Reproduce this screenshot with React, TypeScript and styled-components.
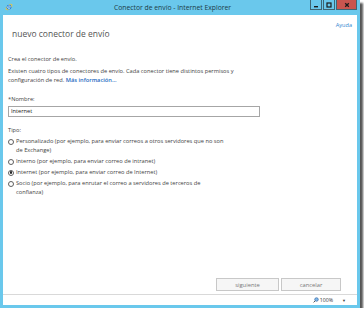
import React from 'react';
import styled, { createGlobalStyle } from 'styled-components';

const GlobalStyle = createGlobalStyle`
  html, body {
    margin: 0;
    padding: 0;
    background: #ffffff;
  }
  body {
    font-family: "Open Sans", "Noto Sans", sans-serif;
  }
`;

const Window = styled.div`
  width: 360px;
  height: 308px;
  box-sizing: border-box;
  padding: 0 3px 3px 3px;
  background: #6ac8ec;
  display: flex;
  flex-direction: column;
  box-shadow: 3px 3px 2px rgba(55, 55, 55, 0.85);
`;

const TitleBar = styled.div`
  height: 15px;
  flex: none;
  display: flex;
  align-items: flex-start;
`;

const AppIcon = styled.svg`
  width: 8px;
  height: 8px;
  margin: 3px 0 0 2px;
`;

const Title = styled.div`
  flex: 1;
  text-align: center;
  font-size: 6.8px;
  line-height: 15px;
  color: #1d3b47;
  padding-left: 22px;
`;

const Controls = styled.div`
  display: flex;
  gap: 1px;
`;

const ControlButton = styled.div<{ $close?: boolean }>`
  width: ${(p) => (p.$close ? '21px' : '12px')};
  height: 10px;
  box-sizing: border-box;
  border: 1px solid #3f6674;
  border-top: none;
  background: ${(p) => (p.$close ? '#c9554f' : '#6ac8ec')};
  display: flex;
  align-items: center;
  justify-content: center;
`;

const Content = styled.div`
  flex: 1;
  background: #ffffff;
  display: flex;
  flex-direction: column;
  color: #444444;
`;

const Header = styled.div`
  display: flex;
  justify-content: space-between;
  align-items: flex-start;
  padding: 0 5px 0 9px;
`;

const Heading = styled.h1`
  margin: 13px 0 0 0;
  font-size: 8.5px;
  line-height: 12px;
  font-weight: 400;
  color: #555555;
`;

const HelpLink = styled.a`
  margin-top: 6px;
  font-size: 5.6px;
  line-height: 8px;
  color: #2f86cf;
  text-decoration: none;
`;

const Body = styled.div`
  padding: 0 5px;
  font-size: 5.7px;
  line-height: 9px;
`;

const Paragraph = styled.p<{ $top?: number }>`
  margin: ${(p) => p.$top ?? 0}px 0 0 0;
`;

const MoreLink = styled.a`
  color: #1f6cbf;
  text-decoration: none;
  font-weight: 600;
`;

const FieldLabel = styled.label`
  display: block;
  margin-top: 10px;
`;

const TextInput = styled.input`
  display: block;
  box-sizing: border-box;
  margin-top: 1.5px;
  width: 252px;
  height: 11px;
  padding: 0 2px;
  border: 1px solid #a6a6a6;
  font-family: "Open Sans", "Noto Sans", sans-serif;
  font-size: 5.7px;
  color: #222222;
  outline: none;
`;

const GroupLabel = styled.div`
  margin-top: 9.5px;
`;

const RadioList = styled.div`
  display: flex;
  flex-direction: column;
  gap: 2px;
  margin-top: 2px;
`;

const RadioRow = styled.label`
  display: flex;
  align-items: flex-start;
  gap: 2px;
  width: 219px;
`;

const RadioDot = styled.input.attrs({ type: 'radio' })`
  appearance: none;
  flex: none;
  width: 6px;
  height: 6px;
  margin: 1.5px 0 0 0;
  box-sizing: border-box;
  border: 1px solid #5e5e5e;
  border-radius: 50%;
  background: #ffffff;
  display: grid;
  place-items: center;

  &:checked::after {
    content: '';
    width: 2.5px;
    height: 2.5px;
    border-radius: 50%;
    background: #222222;
  }
`;

const Spacer = styled.div`
  flex: 1;
`;

const Footer = styled.div`
  display: flex;
  justify-content: flex-end;
  gap: 2px;
  padding: 0 16px 3px 0;
`;

const Button = styled.button<{ $width: number }>`
  width: ${(p) => p.$width}px;
  height: 13px;
  box-sizing: border-box;
  border: 1px solid #c8c8c8;
  background: #f6f6f6;
  color: #777777;
  font-family: "Open Sans", "Noto Sans", sans-serif;
  font-size: 5.8px;
  padding: 0;
`;

const StatusBar = styled.div`
  height: 11px;
  flex: none;
  box-sizing: border-box;
  border-top: 1px solid #d9d9d9;
  background: #ffffff;
  display: flex;
  align-items: center;
  justify-content: flex-end;
  padding-right: 11px;
  font-size: 5.2px;
  color: #333333;
`;

const Zoom = styled.span`
  display: flex;
  align-items: center;
  gap: 1px;
`;

const Caret = styled.span`
  margin-left: 9px;
  font-size: 4px;
  color: #444444;
`;

const options = [
  {
    id: 'custom',
    text: 'Personalizado (por ejemplo, para enviar correos a otros servidores que no son de Exchange)',
  },
  { id: 'internal', text: 'Interno (por ejemplo, para enviar correo de intranet)' },
  { id: 'internet', text: 'Internet (por ejemplo, para enviar correo de Internet)' },
  {
    id: 'partner',
    text: 'Socio (por ejemplo, para enrutar el correo a servidores de terceros de confianza)',
  },
];

const App: React.FC = () => {
  return (
    <>
      <GlobalStyle />
      <Window>
        <TitleBar>
          <AppIcon viewBox="0 0 16 16">
            <ellipse cx="8" cy="8" rx="7.5" ry="3.2" transform="rotate(-40 8 8)" fill="none" stroke="#f2c230" strokeWidth="1.6" />
            <circle cx="8" cy="8.3" r="4.8" fill="#2a7fd4" />
            <path d="M5.2 8.3h5.6a2.8 2.8 0 1 0-0.6 1.9" fill="none" stroke="#bfe4ff" strokeWidth="1.4" />
          </AppIcon>
          <Title>Conector de envío - Internet Explorer</Title>
          <Controls>
            <ControlButton>
              <svg width="6" height="6" viewBox="0 0 6 6">
                <rect x="1" y="4" width="4" height="1.4" fill="#1b1b1b" />
              </svg>
            </ControlButton>
            <ControlButton>
              <svg width="6" height="6" viewBox="0 0 6 6">
                <rect x="1" y="1" width="4" height="4" fill="none" stroke="#1b1b1b" strokeWidth="1.2" />
              </svg>
            </ControlButton>
            <ControlButton $close>
              <svg width="6" height="6" viewBox="0 0 6 6">
                <path d="M1.2 1.2L4.8 4.8M4.8 1.2L1.2 4.8" stroke="#1b1b1b" strokeWidth="1.3" />
              </svg>
            </ControlButton>
          </Controls>
        </TitleBar>
        <Content>
          <Header>
            <Heading>nuevo conector de envío</Heading>
            <HelpLink href="#">Ayuda</HelpLink>
          </Header>
          <Body>
            <Paragraph $top={15}>Crea el conector de envío.</Paragraph>
            <Paragraph $top={3}>
              Existen cuatro tipos de conectores de envío. Cada conector tiene distintos permisos y
              <br />
              configuración de red. <MoreLink href="#">Más información...</MoreLink>
            </Paragraph>
            <FieldLabel htmlFor="name">*Nombre:</FieldLabel>
            <TextInput id="name" defaultValue="Internet" />
            <GroupLabel>Tipo:</GroupLabel>
            <RadioList>
              {options.map((o) => (
                <RadioRow key={o.id}>
                  <RadioDot name="type" defaultChecked={o.id === 'internet'} />
                  <span>{o.text}</span>
                </RadioRow>
              ))}
            </RadioList>
          </Body>
          <Spacer />
          <Footer>
            <Button $width={63}>siguiente</Button>
            <Button $width={60}>cancelar</Button>
          </Footer>
        </Content>
        <StatusBar>
          <Zoom>
            <svg width="6" height="6" viewBox="0 0 12 12">
              <circle cx="7" cy="5" r="3.6" fill="#7fb6e8" stroke="#2b5f9e" strokeWidth="1.2" />
              <path d="M4.4 7.6L1.2 10.8" stroke="#555" strokeWidth="2" />
            </svg>
            100%
          </Zoom>
          <Caret>▼</Caret>
        </StatusBar>
      </Window>
    </>
  );
};

export default App;
